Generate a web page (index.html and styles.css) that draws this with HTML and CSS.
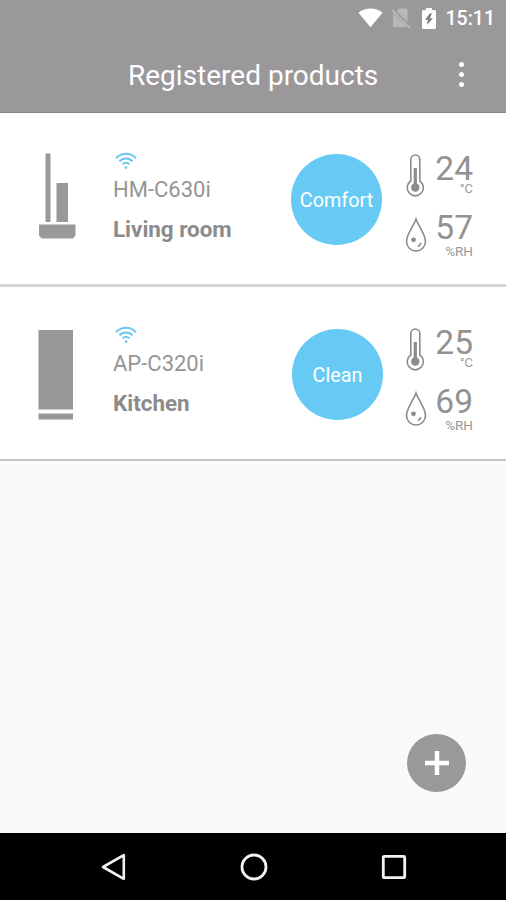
FILE: index.html
```html
<!DOCTYPE html>
<html lang="en">
<head>
  <meta charset="UTF-8">
  <meta name="viewport" content="width=device-width, initial-scale=1.0">
  <title>Registered products</title>
  <link rel="stylesheet" href="styles.css">
</head>
<body>

  <!-- Shared icons -->
  <svg class="sprite" aria-hidden="true">
    <symbol id="wifi" viewBox="0 0 22 18">
      <g fill="none" stroke="#6cc5f2" stroke-width="2">
        <path d="M1 6.2C6.5.3 15.5.3 21 6.2"/>
        <path d="M4.4 9.4c3.7-4 9.5-4 13.2 0"/>
        <path d="M7.6 12.4c2-2.1 4.8-2.1 6.8 0"/>
      </g>
      <circle cx="11" cy="15.6" r="1.4" fill="#6cc5f2"/>
    </symbol>
    <symbol id="thermo" viewBox="0 0 20 44">
      <path d="M5.8 27V5.500a4.500 4.500 0 0 1 9 0V27a8.100 8.100 0 1 1-9 0z" fill="none" stroke="#8b8b8b" stroke-width="1.600"/>
      <path d="M10.300 14v20" stroke="#8b8b8b" stroke-width="3.200"/>
      <circle cx="10.300" cy="33.500" r="4.200" fill="#8b8b8b"/>
    </symbol>
    <symbol id="drop" viewBox="0 0 22 36">
      <path d="M11 2C8.500 9.500 1.500 17 1.500 24.500a9.500 9.500 0 0 0 19 0C20.500 17 13.500 9.500 11 2z" fill="none" stroke="#8b8b8b" stroke-width="1.600"/>
      <circle cx="8.500" cy="22.800" r="2.400" fill="#8b8b8b"/>
      <path d="M12.800 29.500q2.300-1 3.200-3.500" fill="none" stroke="#8b8b8b" stroke-width="1.500"/>
    </symbol>
  </svg>

  <header>
    <div class="status-bar">
      <svg width="25" height="20" viewBox="0 0 26 20">
        <path d="M0.500 4.500C8-1.200 18-1.200 25.500 4.500L13 19.500z" fill="#fff"/>
      </svg>
      <svg class="no-sim" width="20" height="22" viewBox="0 0 20 22">
        <path d="M8 1.500h7q1.500 0 1.500 1.500v12.200L5.500 4zM2 6l14 14H3.500Q2 20 2 18.500z" fill="#b9b8b9"/>
        <path d="M1 3l18 18" stroke="#b9b8b9" stroke-width="1.800"/>
      </svg>
      <svg class="battery" width="14" height="21" viewBox="0 0 14 21">
        <path d="M4 0h6v2h2.500Q14 2 14 3.500v16q0 1.500-1.500 1.500h-11Q0 21 0 19.500v-16Q0 2 1.500 2H4z" fill="#fff"/>
        <path d="M7.800 5.500 3 11.700h3L4.800 17 11 10.200H7.800L10 5.500z" fill="#807e80"/>
      </svg>
      <span class="clock">15:11</span>
    </div>
    <div class="title-bar">
      <h1>Registered products</h1>
      <button class="menu" aria-label="Menu"><i></i><i></i><i></i></button>
    </div>
  </header>

  <main>
    <section class="product">
      <svg class="device" width="38" height="88" viewBox="0 0 38 88">
        <path d="M7.500 1.500h5V70h-5zM18.500 31H30v39H18.500zM1 72.500h36.500v11L35 86.500H3.500L1 83.500z" fill="#989a9a"/>
      </svg>
      <div class="info">
        <svg width="22" height="18"><use href="#wifi"/></svg>
        <p class="model">HM-C630i</p>
        <p class="room">Living room</p>
      </div>
      <div class="state">Comfort</div>
      <div class="readings">
        <div class="reading">
          <svg width="20" height="44"><use href="#thermo"/></svg>
          <p><b>24</b><span>°C</span></p>
        </div>
        <div class="reading humidity">
          <svg width="22" height="36"><use href="#drop"/></svg>
          <p><b>57</b><span>%RH</span></p>
        </div>
      </div>
    </section>

    <section class="product last">
      <svg class="device" width="38" height="94" viewBox="0 0 38 94">
        <path d="M.500 4h34.500v79.500H.500zM.500 87.500h34.500v6H.500z" fill="#979797"/>
      </svg>
      <div class="info">
        <svg width="22" height="18"><use href="#wifi"/></svg>
        <p class="model">AP-C320i</p>
        <p class="room">Kitchen</p>
      </div>
      <div class="state">Clean</div>
      <div class="readings">
        <div class="reading">
          <svg width="20" height="44"><use href="#thermo"/></svg>
          <p><b>25</b><span>°C</span></p>
        </div>
        <div class="reading humidity">
          <svg width="22" height="36"><use href="#drop"/></svg>
          <p><b>69</b><span>%RH</span></p>
        </div>
      </div>
    </section>

    <button class="add" aria-label="Add product">
      <svg width="24" height="24"><path d="M12 0v24M0 12h24" stroke="#fff" stroke-width="4.500"/></svg>
    </button>
  </main>

  <nav>
    <svg width="28" height="30" viewBox="0 0 28 30">
      <path d="M23.800 3.200v23.600L3 15z" fill="none" stroke="#f2f2f2" stroke-width="2.600" stroke-linejoin="round"/>
    </svg>
    <svg class="home" width="28" height="28" viewBox="0 0 28 28">
      <circle cx="14" cy="14" r="12" fill="none" stroke="#f2f2f2" stroke-width="2.800"/>
    </svg>
    <svg width="26" height="26" viewBox="0 0 26 26">
      <rect x="2.300" y="2.300" width="21.400" height="21.400" rx="1" fill="none" stroke="#f2f2f2" stroke-width="2.800"/>
    </svg>
  </nav>

</body>
</html>
```

FILE: styles.css
```css
* {
  margin: 0;
  padding: 0;
  box-sizing: border-box;
}

body {
  height: 100vh;
  display: flex;
  flex-direction: column;
  background-color: #fafafa;
  font-family: Roboto, sans-serif;
  color: #8b8b8b;
}

svg {
  display: block;
  flex: none;
}

.sprite {
  position: absolute;
  width: 0;
  height: 0;
}

button {
  border: none;
  cursor: pointer;
}

header {
  height: 113px;
  background-color: #9a989a;
  border-bottom: 1px solid #858385;
  color: white;
}

.status-bar {
  height: 36px;
  display: flex;
  justify-content: flex-end;
  align-items: center;
  padding-right: 11px;
}

.no-sim {
  margin-left: 8px;
}

.battery {
  margin: 0 10px 0 11px;
}

.clock {
  font-size: 19.5px;
  font-weight: 500;
  line-height: 36px;
  padding-top: 1px;
}

.title-bar {
  height: 77px;
  display: flex;
  align-items: center;
  padding-left: 128px;
}

.title-bar h1 {
  width: 314px;
  font-size: 28px;
  font-weight: 400;
  line-height: 77px;
  padding-top: 1px;
  white-space: nowrap;
}

.menu {
  width: 38px;
  display: flex;
  flex-direction: column;
  align-items: center;
  gap: 5px;
  background: none;
}

.menu i {
  width: 5px;
  height: 5px;
  border-radius: 50%;
  background-color: white;
}

main {
  flex: 1;
  position: relative;
}

.product {
  height: 174px;
  display: grid;
  grid-template-columns: 75px 178px 114px 68px;
  align-items: start;
  padding: 39px 33px 0 38px;
  background-color: white;
  border-bottom: 3px solid #d5d5d5;
}

.product.last {
  border-bottom: 2px solid #c4c4c4;
}

.info svg {
  margin-left: 2px;
}

.model {
  margin-top: 7px;
  font-size: 22px;
  font-weight: 400;
  line-height: 26px;
  color: #959595;
}

.room {
  margin-top: 13px;
  font-size: 22.4px;
  font-weight: 700;
  line-height: 26px;
}

.state {
  width: 91px;
  height: 91px;
  margin-top: 2px;
  border-radius: 50%;
  background-color: #67caf5;
  color: white;
  font-size: 19.8px;
  line-height: 93px;
  text-align: center;
}

.last .state {
  margin: 3px 0 0 1px;
}

.reading {
  height: 60px;
  display: flex;
  justify-content: space-between;
  padding-top: 2px;
}

.reading p {
  text-align: right;
}

.reading b {
  display: block;
  font-size: 33.5px;
  font-weight: 400;
  line-height: 30px;
  color: #929292;
}

.reading span {
  display: block;
  margin-top: -2px;
  font-size: 13px;
  font-weight: 400;
  line-height: 14px;
  color: #989898;
}

.humidity svg {
  margin-top: 3px;
}

.humidity p {
  margin-top: -1px;
}

.humidity span {
  margin-top: 1px;
  font-size: 13.5px;
}

.add {
  position: absolute;
  right: 40px;
  bottom: 41px;
  width: 59px;
  height: 58px;
  display: flex;
  justify-content: center;
  align-items: center;
  border-radius: 50%;
  background-color: #9a989a;
}

nav {
  height: 67px;
  display: flex;
  justify-content: space-between;
  align-items: center;
  padding: 0 99px 0 100px;
  background-color: black;
}

.home {
  margin-right: 2px;
}
```
